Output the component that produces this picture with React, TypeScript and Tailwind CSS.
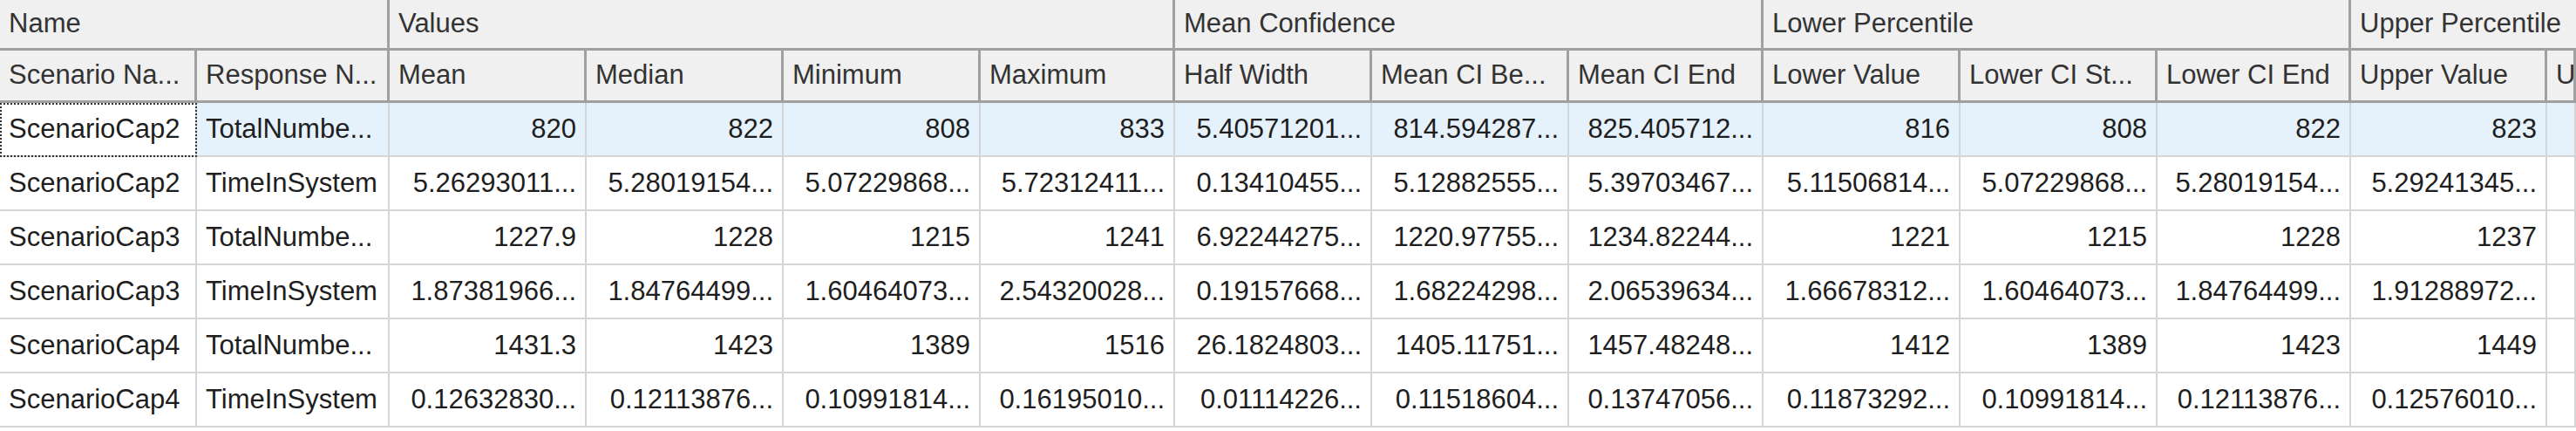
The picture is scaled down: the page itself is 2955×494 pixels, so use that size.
import React from "react";

const rows: string[][] = [
  ["ScenarioCap2","TotalNumbe...","820","822","808","833","5.40571201...","814.594287...","825.405712...","816","808","822","823"],
  ["ScenarioCap2","TimeInSystem","5.26293011...","5.28019154...","5.07229868...","5.72312411...","0.13410455...","5.12882555...","5.39703467...","5.11506814...","5.07229868...","5.28019154...","5.29241345..."],
  ["ScenarioCap3","TotalNumbe...","1227.9","1228","1215","1241","6.92244275...","1220.97755...","1234.82244...","1221","1215","1228","1237"],
  ["ScenarioCap3","TimeInSystem","1.87381966...","1.84764499...","1.60464073...","2.54320028...","0.19157668...","1.68224298...","2.06539634...","1.66678312...","1.60464073...","1.84764499...","1.91288972..."],
  ["ScenarioCap4","TotalNumbe...","1431.3","1423","1389","1516","26.1824803...","1405.11751...","1457.48248...","1412","1389","1423","1449"],
  ["ScenarioCap4","TimeInSystem","0.12632830...","0.12113876...","0.10991814...","0.16195010...","0.01114226...","0.11518604...","0.13747056...","0.11873292...","0.10991814...","0.12113876...","0.12576010..."],
];
const heads = ["Scenario Na...","Response N...","Mean","Median","Minimum","Maximum","Half Width","Mean CI Be...","Mean CI End","Lower Value","Lower CI St...","Lower CI End","Upper Value","U"];
const groups: [string, string][] = [["Name","col-span-2"],["Values","col-span-4"],["Mean Confidence","col-span-3"],["Lower Percentile","col-span-3"],["Upper Percentile","col-span-2"]];

export default function App() {
  return (
    <div className="w-[2955px] h-[494px] overflow-hidden bg-white text-[#1e1e1e] text-[31px]" style={{ fontFamily: '"Liberation Sans", Arial, sans-serif' }}>
      <div className="grid grid-cols-[226px_221px_226px_226px_226px_223px_226px_226px_223px_226px_226px_222px_225px_33px]">
        {groups.map(([g, span], i) => (
          <div key={g} className={`${span} h-[58px] bg-[#f0f0f0] border-b-[3px] border-[#a0a0a0] ${i < 4 ? "border-r-[3px]" : ""} flex items-center px-[10px] whitespace-nowrap overflow-hidden text-[#333]`}>{g}</div>
        ))}
        {heads.map((h, i) => (
          <div key={i} className="h-[60px] bg-[#f0f0f0] border-b-[3px] border-r-[3px] border-[#a0a0a0] flex items-center px-[10px] whitespace-nowrap overflow-hidden text-[#333]">{h}</div>
        ))}
        {rows.map((r, ri) => (
          <React.Fragment key={ri}>
            {[...r, ""].map((c, ci) => (
              <div key={ci} className={`h-[62px] border-b-2 border-r-2 border-[#d5d5d5] flex items-center px-[10px] whitespace-nowrap overflow-hidden ${ri === 0 && ci > 0 ? "bg-[#e5f1fb]" : ""} ${ci >= 2 ? "justify-end" : ""} ${ri === 0 && ci === 0 ? "outline-dotted outline-2 outline-[#333] -outline-offset-2" : ""}`}>{c}</div>
            ))}
          </React.Fragment>
        ))}
      </div>
    </div>
  );
}
